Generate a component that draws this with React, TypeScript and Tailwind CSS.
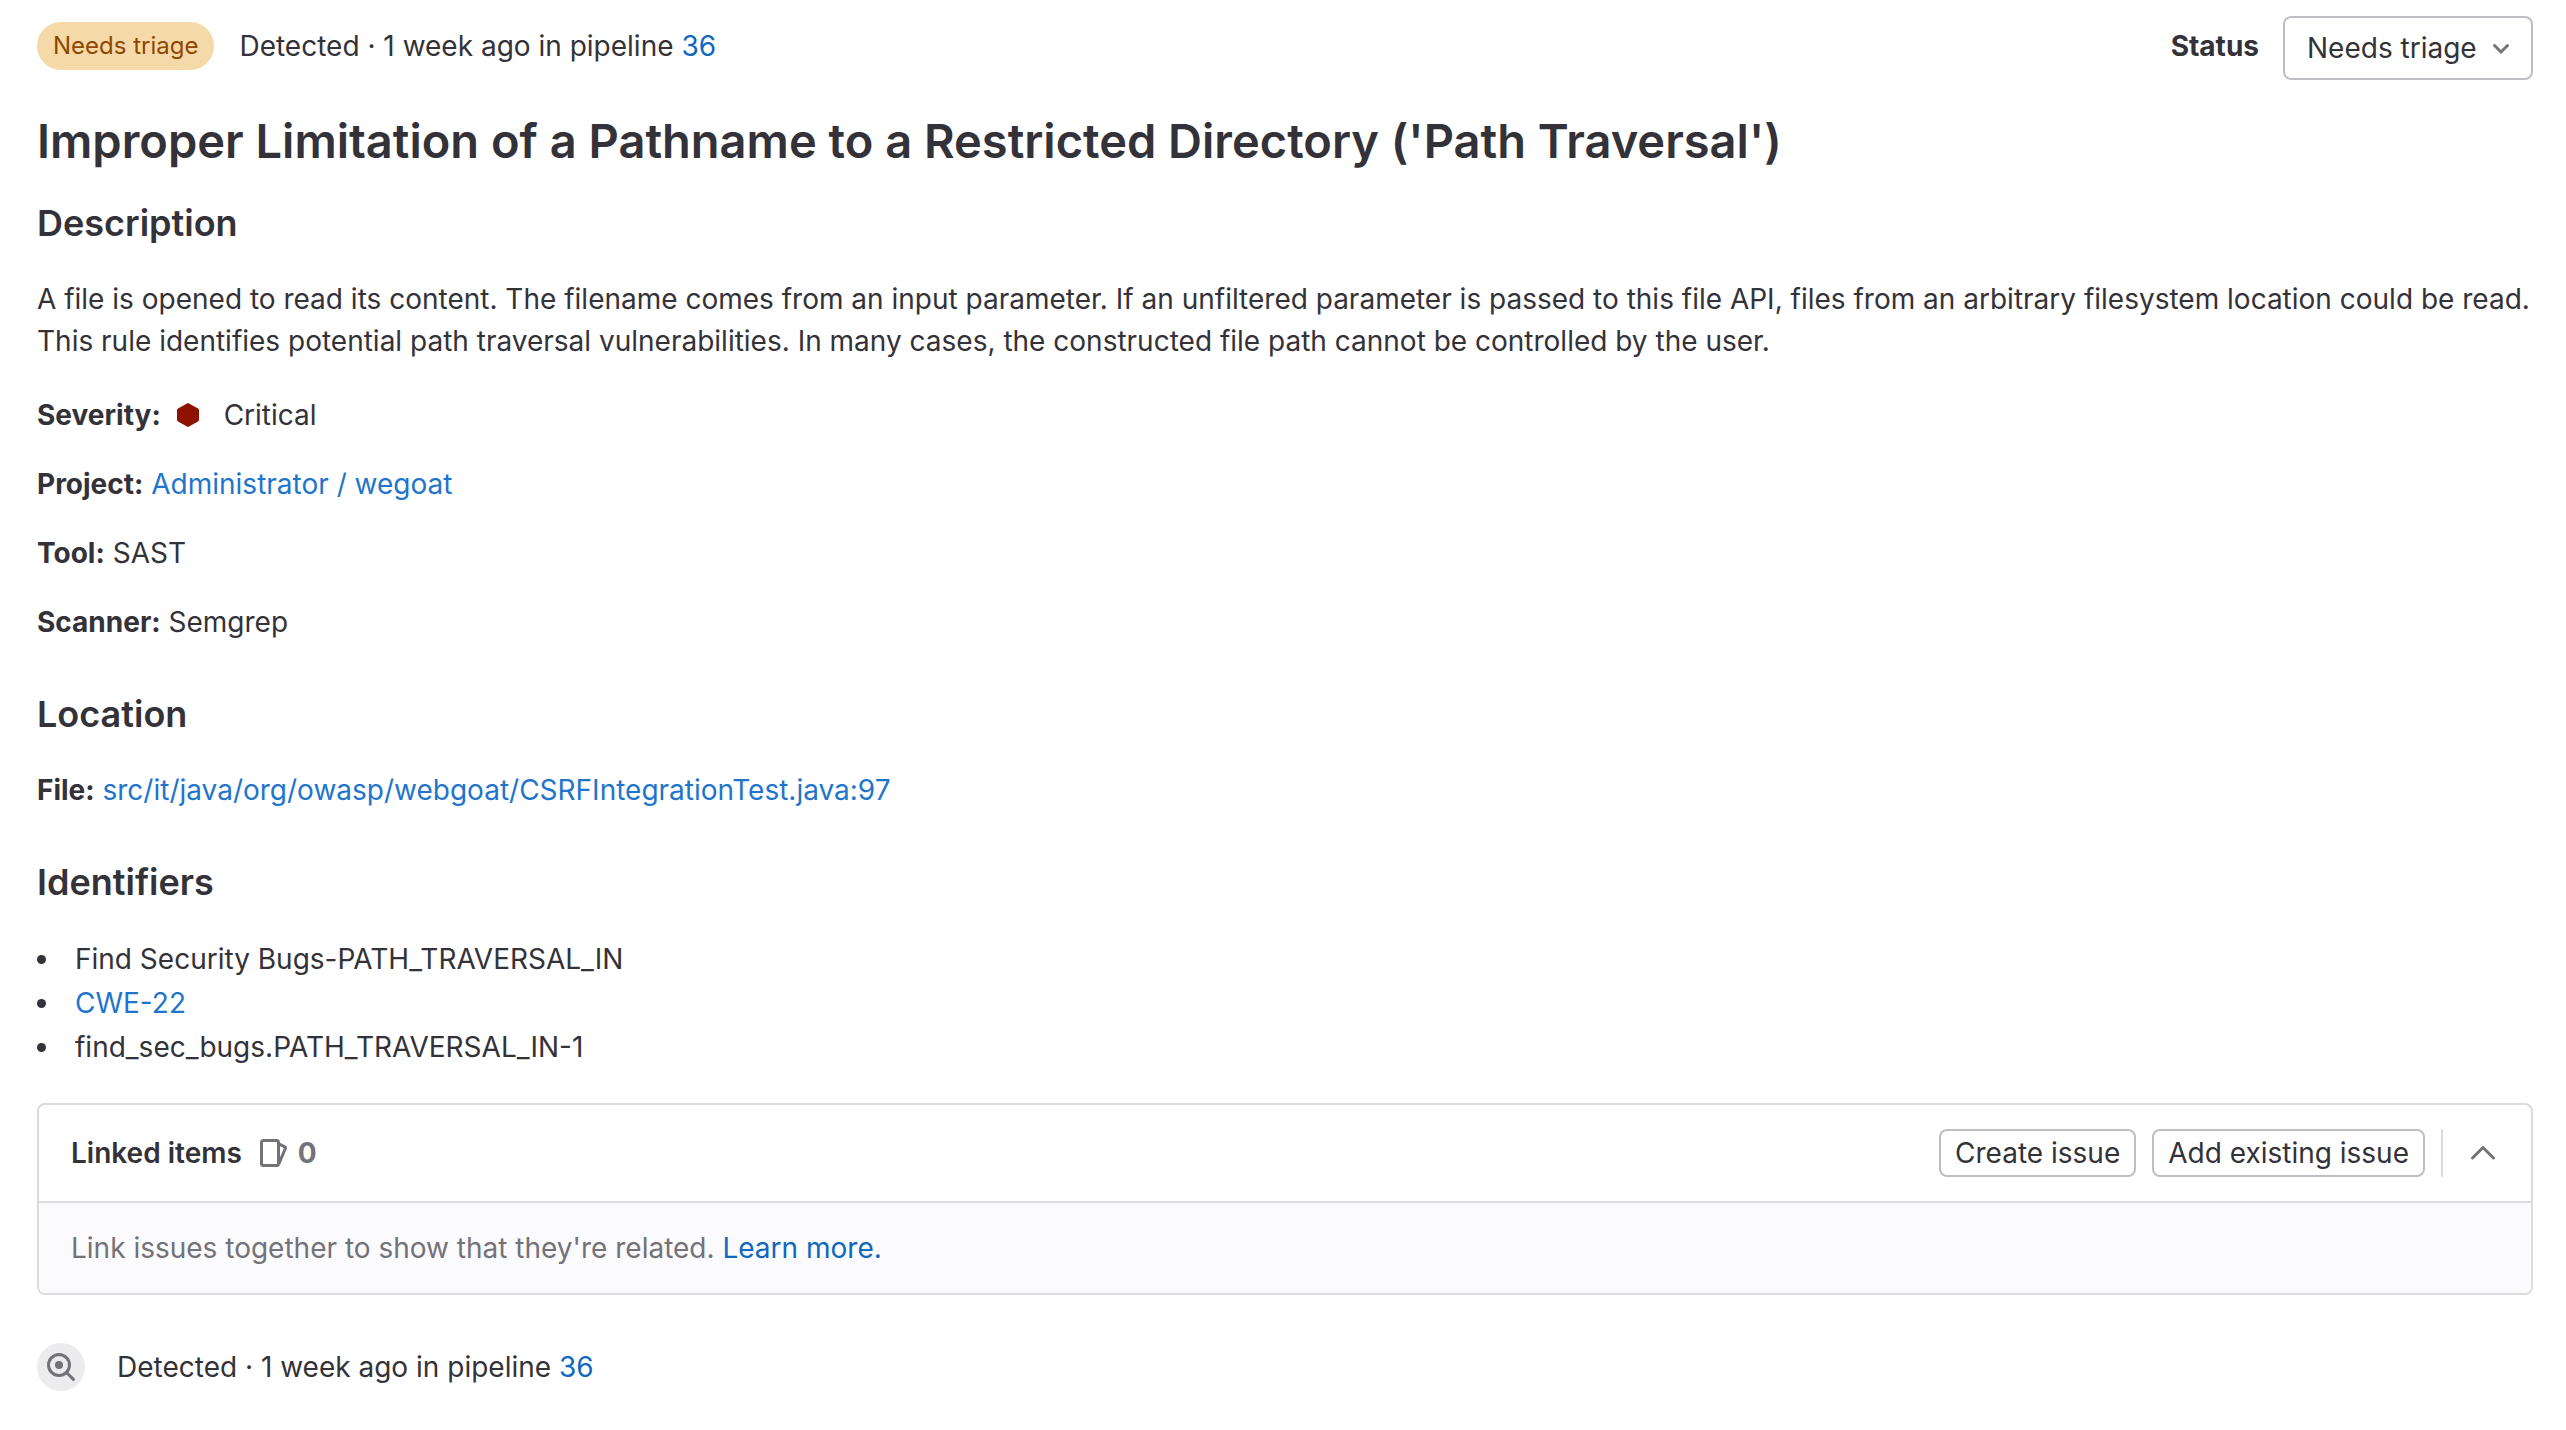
import { useState } from "react";
import type { ReactNode } from "react";

const link = "text-[#1f75cb] hover:underline";
const darkLink = "text-[#1068bf] hover:underline";
const heading = "text-[36px] leading-[48px] font-semibold";
const smallButton =
  "flex h-12 items-center rounded-lg bg-white px-4 shadow-[inset_0_0_0_2px_#bfbfc3]";

function Field({ label, children }: { label: string; children: ReactNode }) {
  return (
    <li>
      <strong className="font-bold">{label}</strong> {children}
    </li>
  );
}

function Identifier({ children }: { children: ReactNode }) {
  return (
    <li className="flex items-center gap-[29px] before:size-[9px] before:rounded-full before:bg-[#333238]">
      {children}
    </li>
  );
}

function Detected() {
  return (
    <p>
      Detected · 1 week ago in pipeline{" "}
      <a href="#pipeline-36" className={darkLink}>
        36
      </a>
    </p>
  );
}

function ChevronDown() {
  return (
    <svg className="pointer-events-none absolute top-4 right-4" width="32" height="32" viewBox="0 0 16 16" fill="none" stroke="#737278" strokeWidth="1.5" strokeLinecap="round" aria-hidden="true">
      <path d="M4.75 6.75 8 10l3.25-3.25" />
    </svg>
  );
}

function ChevronUp({ flipped }: { flipped: boolean }) {
  return (
    <svg className={flipped ? "rotate-180" : ""} width="32" height="32" viewBox="0 0 16 16" fill="none" stroke="#737278" strokeWidth="1.5" strokeLinecap="round" aria-hidden="true">
      <path d="M2.75 10.5 8 5.25l5.25 5.25" />
    </svg>
  );
}

function IssuesIcon() {
  return (
    <svg width="32" height="32" viewBox="0 0 16 16" fill="none" stroke="#737278" strokeWidth="1.5" strokeLinejoin="round" aria-hidden="true">
      <rect x="1.75" y="1.75" width="8.5" height="12.5" rx="1" />
      <path d="m10.4 3.4 3 1.500a.6.6 0 0 1 .3.8l-3.300 7.800" />
    </svg>
  );
}

function SearchDotIcon() {
  return (
    <svg width="32" height="32" viewBox="0 0 16 16" fill="none" stroke="#737278" strokeWidth="1.5" strokeLinecap="round" aria-hidden="true">
      <circle cx="7" cy="7" r="5.25" />
      <path d="m10.9 10.9 3.3 3.3" />
      <circle cx="7" cy="7" r="2" fill="#737278" stroke="none" />
    </svg>
  );
}

function CriticalIcon() {
  return (
    <svg className="mr-5 ml-[3px] inline-block align-[-6px]" width="32" height="32" viewBox="0 0 16 16" fill="#8d1300" aria-hidden="true">
      <path d="M7.5 2.2a1 1 0 0 1 1 0l4.500 2.500a1 1 0 0 1 .5.9v4.800a1 1 0 0 1-.5.9l-4.500 2.500a1 1 0 0 1-1 0L3 11.300a1 1 0 0 1-.5-.9V5.600a1 1 0 0 1 .5-.9z" />
    </svg>
  );
}

export default function App() {
  const [open, setOpen] = useState(true);
  return (
    <main className="bg-white pt-4 pr-[33px] pb-8 pl-[37px] font-['Inter',sans-serif] text-[28px] leading-[42px] text-[#333238]">
      <header className="flex items-start justify-between">
        <div className="flex h-[60px] items-center gap-[25px]">
          <span className="flex h-12 items-center rounded-full bg-[#f5d9a8] px-4 text-[24px] text-[#8f4700]">
            Needs triage
          </span>
          <Detected />
        </div>
        <div className="flex gap-6">
          <label htmlFor="status" className="flex h-[60px] items-center font-bold">
            Status
          </label>
          <div className="relative">
            <select
              id="status"
              className="h-16 appearance-none rounded-lg bg-white pr-14 pl-6 shadow-[inset_0_0_0_2px_#bfbfc3]"
            >
              <option>Needs triage</option>
            </select>
            <ChevronDown />
          </div>
        </div>
      </header>

      <h1 className="mt-[31px] text-[47px] leading-[60px] font-semibold">
        Improper Limitation of a Pathname to a Restricted Directory ('Path Traversal')
      </h1>

      <h2 className={`mt-7 ${heading}`}>Description</h2>
      <p className="mt-[31px]">
        A file is opened to read its content. The filename comes from an input parameter. If an
        unfiltered parameter is passed to this file API, files from an arbitrary filesystem location
        could be read. This rule identifies potential path traversal vulnerabilities. In many cases,
        the constructed file path cannot be controlled by the user.
      </p>
      <ul className="mt-8 flex flex-col gap-[27px]">
        <Field label="Severity:">
          <CriticalIcon />
          Critical
        </Field>
        <Field label="Project:">
          <a href="#project" className={link}>Administrator / wegoat</a>
        </Field>
        <Field label="Tool:">SAST</Field>
        <Field label="Scanner:">Semgrep</Field>
      </ul>

      <h2 className={`mt-[47px] ${heading}`}>Location</h2>
      <ul className="mt-[31px]">
        <Field label="File:">
          <a href="#file" className={link}>
            src/it/java/org/owasp/webgoat/CSRFIntegrationTest.java:97
          </a>
        </Field>
      </ul>

      <h2 className={`mt-[47px] ${heading}`}>Identifiers</h2>
      <ul className="mt-[31px] leading-[44px]">
        <Identifier>Find Security Bugs-PATH_TRAVERSAL_IN</Identifier>
        <Identifier>
          <a href="#cwe-22" className={link}>CWE-22</a>
        </Identifier>
        <Identifier>find_sec_bugs.PATH_TRAVERSAL_IN-1</Identifier>
      </ul>

      <section className="mt-[34px] overflow-hidden rounded-lg border-2 border-[#dcdcde]">
        <div className="flex h-24 items-center px-8">
          <h3 className="font-semibold">Linked items</h3>
          <span className="ml-4 flex items-center gap-2 font-bold text-[#737278]">
            <IssuesIcon />0
          </span>
          <div className="ml-auto flex items-center gap-4">
            <button type="button" className={smallButton}>Create issue</button>
            <button type="button" className={smallButton}>Add existing issue</button>
            <div className="flex h-12 items-center border-l-2 border-[#dcdcde] pl-6">
              <button
                type="button"
                aria-label="Collapse"
                aria-expanded={open}
                onClick={() => setOpen(!open)}
              >
                <ChevronUp flipped={!open} />
              </button>
            </div>
          </div>
        </div>
        {open && (
          <p className="border-t-2 border-[#dcdcde] bg-[#fbfafd] px-8 py-6 text-[#737278]">
            Link issues together to show that they're related.{" "}
            <a href="#learn-more" className={darkLink}>Learn more.</a>
          </p>
        )}
      </section>

      <div className="mt-12 flex items-center gap-8">
        <span className="flex size-12 items-center justify-center rounded-full bg-[#ececef]">
          <SearchDotIcon />
        </span>
        <Detected />
      </div>
    </main>
  );
}
